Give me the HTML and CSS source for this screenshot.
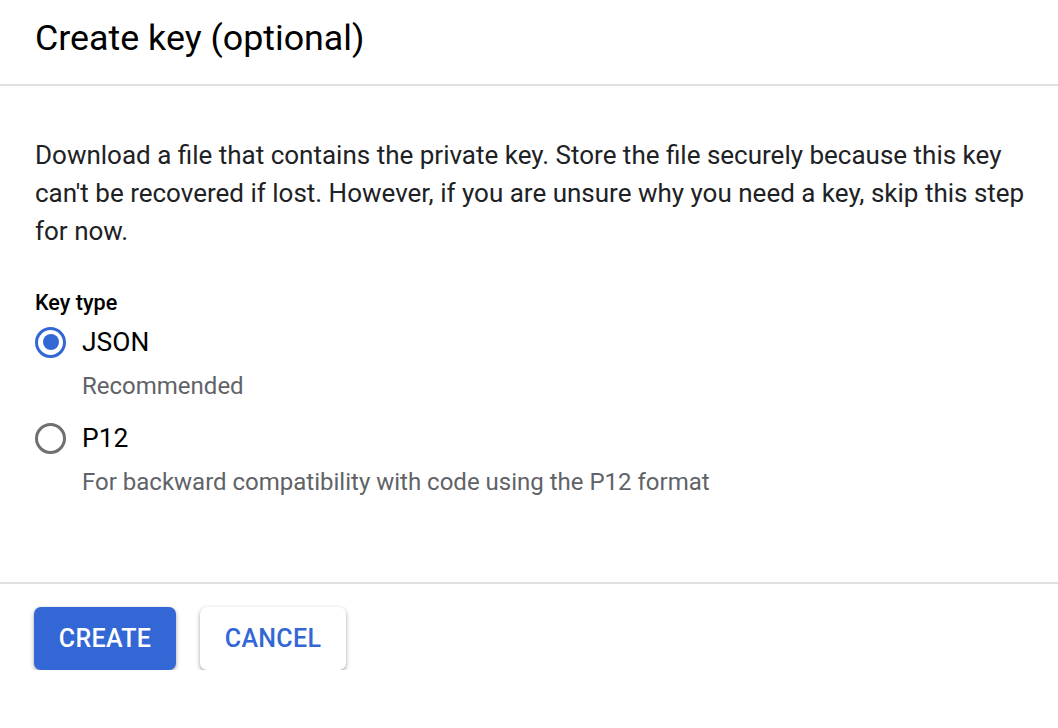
FILE: index.html
```html
<!DOCTYPE html>
<html lang="en">
<head>
<meta charset="utf-8">
<title>Create key (optional)</title>
<link rel="stylesheet" href="styles.css">
</head>
<body>
<div class="dialog">
  <header class="header">
    <h1 class="title">Create key (optional)</h1>
  </header>
  <section class="content">
    <p class="intro">Download a file that contains the private key. Store the file securely because this key can't be recovered if lost. However, if you are unsure why you need a key, skip this step for now.</p>
    <div class="field-label">Key type</div>
    <div class="option">
      <span class="radio checked"></span>
      <span class="option-label">JSON</span>
      <span class="option-desc">Recommended</span>
    </div>
    <div class="option">
      <span class="radio"></span>
      <span class="option-label">P12</span>
      <span class="option-desc">For backward compatibility with code using the P12 format</span>
    </div>
  </section>
  <footer class="footer">
    <button class="btn btn-primary">CREATE</button>
    <button class="btn btn-secondary">CANCEL</button>
  </footer>
</div>
</body>
</html>
```

FILE: styles.css
```css
html, body {
  margin: 0;
  padding: 0;
  background: #ffffff;
}

body {
  font-family: Roboto, "Liberation Sans", Arial, sans-serif;
  color: #202124;
}

.dialog {
  width: 1058px;
}

.header {
  height: 84px;
  border-bottom: 2px solid #e0e0e0;
  display: flex;
  align-items: center;
  padding: 0 35px;
  box-sizing: content-box;
}

.title {
  margin: 0;
  font-size: 35.8px;
  font-weight: 400;
  line-height: 40px;
  color: #000000;
  position: relative;
  top: -4px;
}

.content {
  padding: 50px 5px 0 35px;
  height: 498px;
  box-sizing: border-box;
  border-bottom: 2px solid #e0e0e0;
}

.intro {
  margin: 0;
  font-size: 26px;
  line-height: 38px;
  color: #202124;
}

.field-label {
  margin-top: 39px;
  font-size: 21.6px;
  line-height: 28px;
  font-weight: 500;
  color: #000000;
}

.option {
  display: grid;
  grid-template-columns: 47px 1fr;
  align-items: center;
  margin-top: 5px;
}

.option + .option {
  margin-top: 18px;
}

.radio {
  width: 31px;
  height: 31px;
  box-sizing: border-box;
  border-radius: 50%;
  border: 3.5px solid #6f6f6f;
  display: flex;
  align-items: center;
  justify-content: center;
}

.radio.checked {
  border-color: #3367d6;
}

.radio.checked::after {
  content: "";
  width: 16px;
  height: 16px;
  border-radius: 50%;
  background: #3367d6;
}

.option-label {
  font-size: 26.4px;
  line-height: 40px;
  color: #000000;
}

.option-desc {
  grid-column: 2;
  margin-top: 10px;
  font-size: 24px;
  line-height: 28px;
  color: #5f6368;
}

.footer {
  display: flex;
  gap: 24px;
  padding: 23px 34px 0 34px;
}

.btn {
  height: 63px;
  border: none;
  border-radius: 7px;
  font-family: Roboto, "Liberation Sans", Arial, sans-serif;
  font-size: 25px;
  font-weight: 500;
  letter-spacing: 0.3px;
  cursor: pointer;
  box-shadow: 0 2px 5px rgba(0, 0, 0, 0.3), 0 1px 2px rgba(0, 0, 0, 0.12);
}

.btn-primary {
  width: 142px;
  background: #3367d6;
  color: #ffffff;
}

.btn-secondary {
  width: 146px;
  background: #ffffff;
  color: #3367d6;
}
```
